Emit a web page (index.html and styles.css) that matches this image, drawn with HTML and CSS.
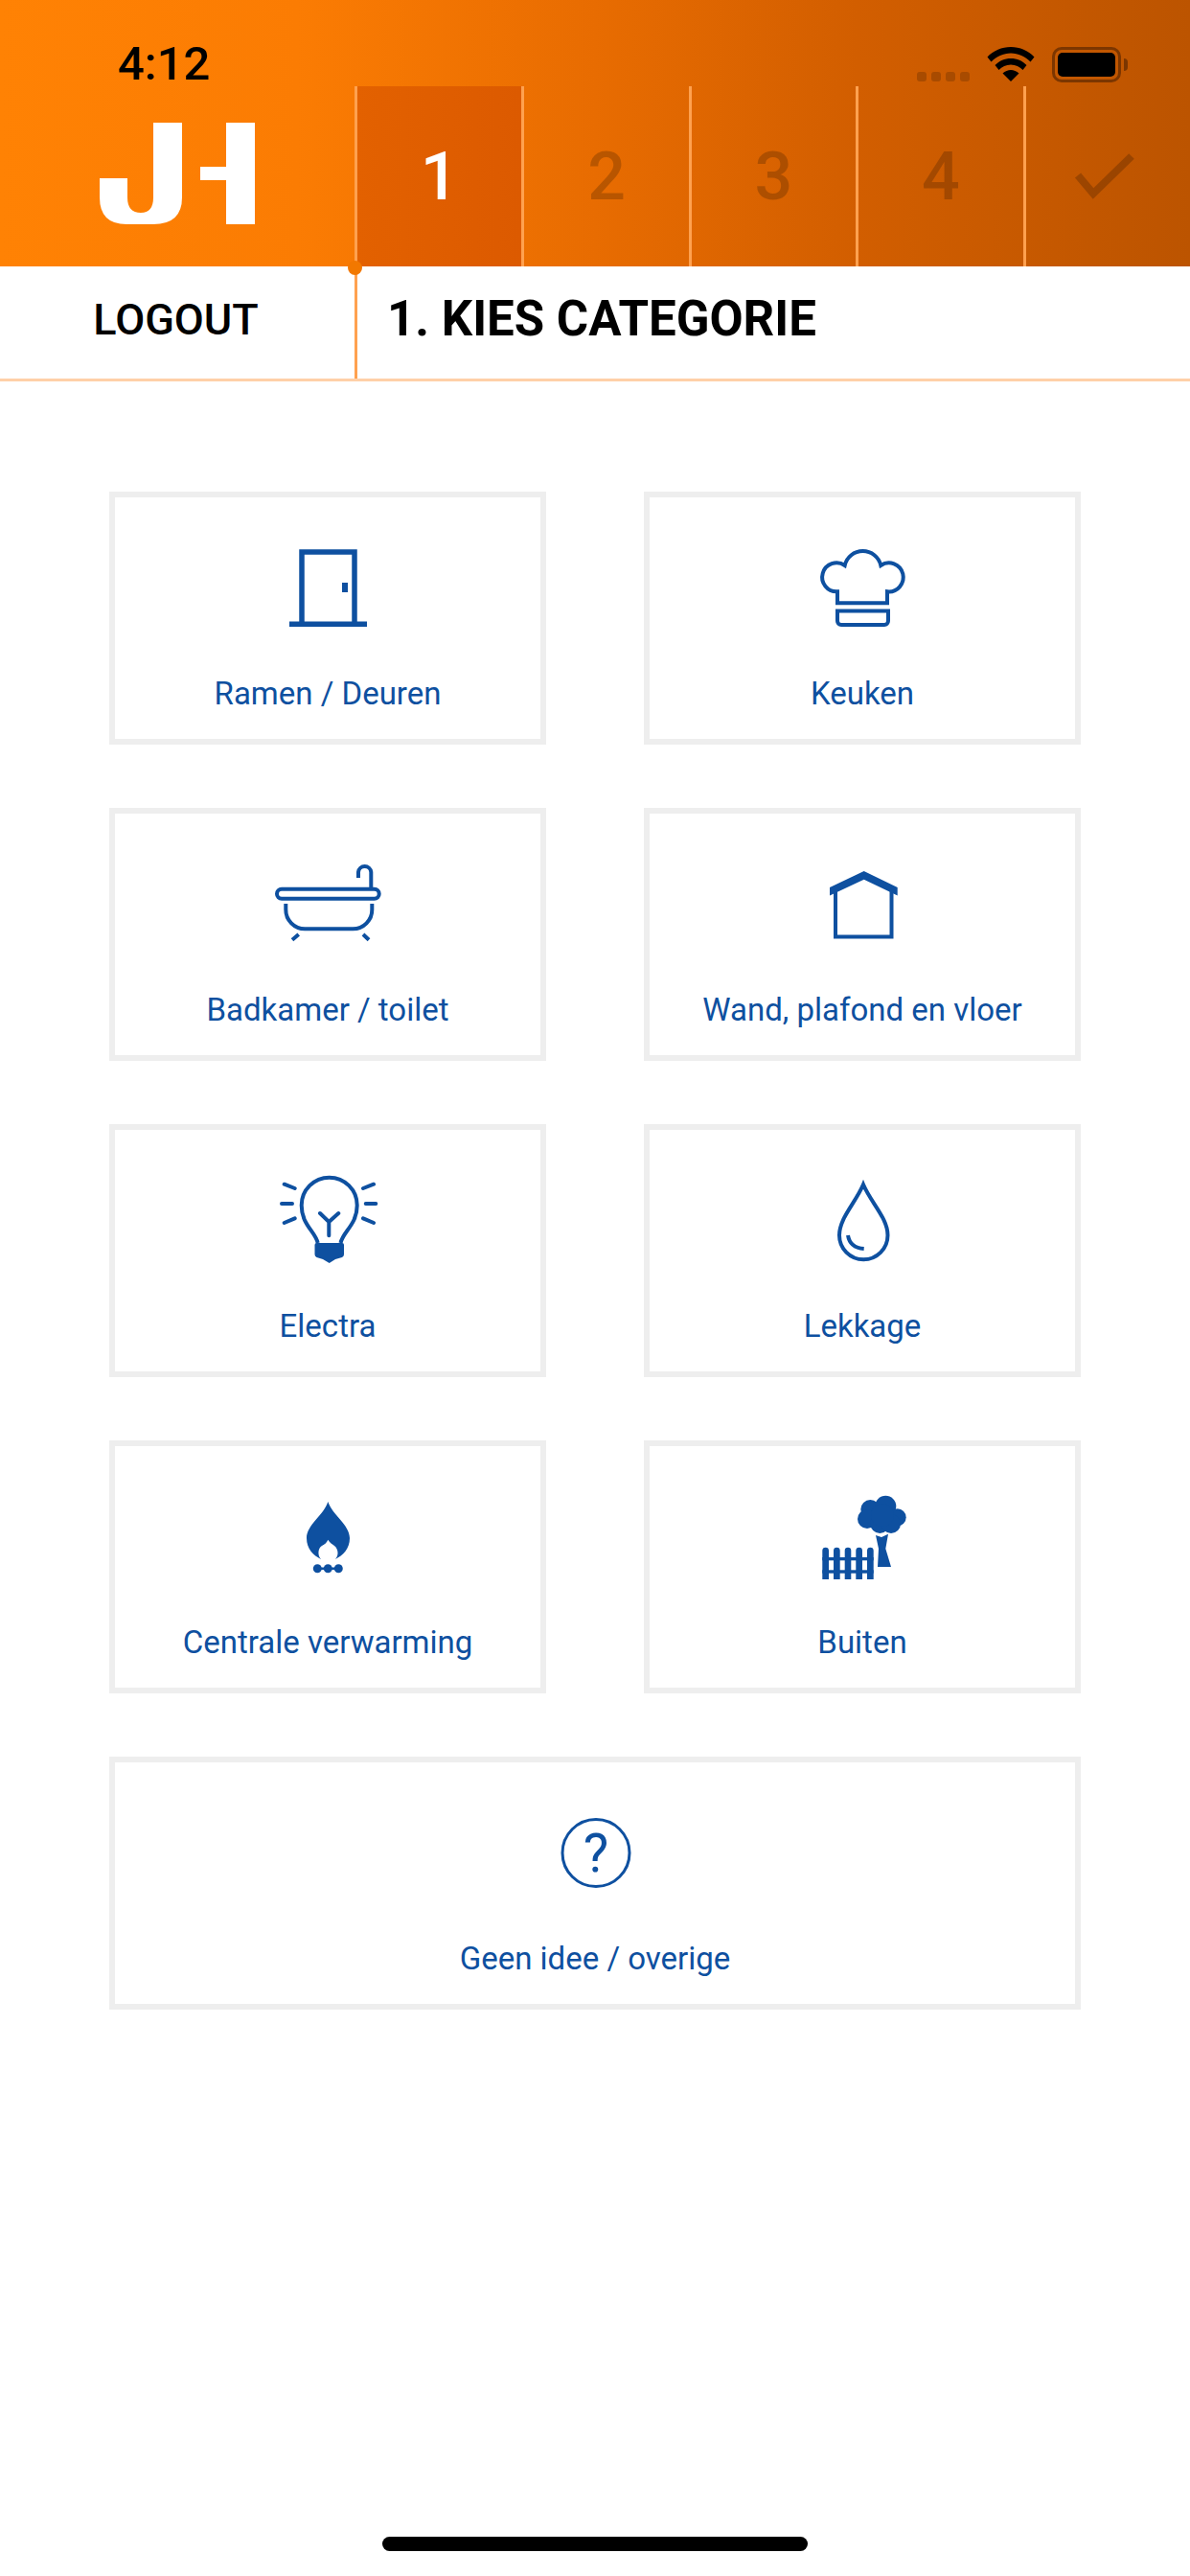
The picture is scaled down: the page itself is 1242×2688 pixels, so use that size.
FILE: index.html
```html
<!DOCTYPE html>
<html>
<head>
  <title>Kies categorie</title>
  <link rel="stylesheet" href="styles.css">
</head>
<body>
  <div class="page">
    <header class="header">
      <div class="status-bar">
        <span class="time">4:12</span>
        <div class="status-icons">
          <div class="signal"><i></i><i></i><i></i><i></i></div>
          <svg class="wifi" width="50" height="36" viewBox="0 0 50 36">
            <path d="M25 0C15.500 0 7 3.800 0.500 10.500L4.500 15.500C10 10 17 6.500 25 6.500S40 10 45.500 15.500L49.500 10.500C43 3.800 34.500 0 25 0Z"/>
            <path d="M25 12C18.500 12 13 14.500 8.500 19L12.500 24C15.800 20.800 20 18.500 25 18.500S34.200 20.800 37.500 24L41.500 19C37 14.500 31.500 12 25 12Z"/>
            <path d="M25 24C22 24 19 25.300 16.500 27.500L25 36L33.500 27.500C31 25.300 28 24 25 24Z"/>
          </svg>
          <div class="battery"><div class="battery-level"></div></div>
          <div class="battery-nub"></div>
        </div>
      </div>
      <div class="nav">
        <div class="logo">
          <svg width="162" height="106" viewBox="0 0 162 106">
            <path d="M56 0H86V78Q86 106 56 106H28Q0 106 0 78V58H29V78Q29 94 43 94Q56 94 56 78Z"/>
            <rect x="132" y="0" width="30" height="106"/>
            <rect x="105" y="46" width="27" height="14"/>
          </svg>
        </div>
        <div class="steps">
          <div class="step active">1</div>
          <div class="step">2</div>
          <div class="step">3</div>
          <div class="step">4</div>
          <div class="step">
            <svg class="check" width="66" height="50" viewBox="0 0 66 50">
              <path d="M6 24L22 43L62 4"/>
            </svg>
          </div>
        </div>
      </div>
    </header>

    <div class="sub-bar">
      <span class="dot"></span>
      <div class="logout">LOGOUT</div>
      <h1 class="title">1. KIES CATEGORIE</h1>
    </div>

    <main class="grid">
      <div class="card">
        <svg class="icon" viewBox="0 0 140 100">
          <path class="line heavy" d="M43 88V13H98V88"/>
          <rect class="fill" x="30" y="85.500" width="81" height="5.500"/>
          <rect class="fill" x="85" y="45" width="6" height="10"/>
        </svg>
        <span class="label">Ramen / Deuren</span>
      </div>
      <div class="card">
        <svg class="icon" viewBox="-1 0 140 100">
          <path class="line" d="M50.700 27A19.300 19.300 0 0 1 88.300 27A15 15 0 1 1 95 54.300V66.300H43V54.300A15 15 0 1 1 50.700 27Z"/>
          <path class="line" d="M43 74.500H96V85A4 4 0 0 1 92 89H47A4 4 0 0 1 43 85Z"/>
        </svg>
        <span class="label">Keuken</span>
      </div>
      <div class="card">
        <svg class="icon" viewBox="0 0 140 100">
          <rect class="line" x="17" y="34.700" width="106.700" height="10" rx="5"/>
          <path class="line" d="M115.300 34V17A6.700 6.700 0 0 0 102 17V23"/>
          <path class="line" d="M26.300 50V56A20 20 0 0 0 46.300 76.300H96.300A20 20 0 0 0 116.300 56V50"/>
          <path class="line" d="M33 87.700L39.700 82M113 87.700L107 82"/>
        </svg>
        <span class="label">Badkamer / toilet</span>
      </div>
      <div class="card">
        <svg class="icon" viewBox="-1 0 140 100">
          <polygon class="fill" points="35,33 70.700,16 105.700,33 105.700,41.500 70.700,24.700 35,41.500"/>
          <path class="line" d="M41 37V84.500H99.500V37"/>
        </svg>
        <span class="label">Wand, plafond en vloer</span>
      </div>
      <div class="card">
        <svg class="icon" viewBox="0 0 140 100">
          <path class="line" d="M59.700 74C57 62 42.700 55 42.700 34.700A29 29 0 0 1 100.700 34.700C100.700 55 86 62 83.500 74"/>
          <path class="fill" d="M56.500 76Q56.500 74 58.500 74H85Q87 74 87 76V86Q87 88 85 89L78 91L71.700 95L65 91L58.500 89Q56.500 88 56.500 86Z"/>
          <path class="line round" d="M62 43L71.300 52L81.300 43M71.300 52V66.300"/>
          <path class="line round" d="M24.700 12.700L35.700 17M22 33H33M24.700 53L35.700 48.300M118 12.700L107 17M120.300 33H109.700M118 53L107 48.300"/>
        </svg>
        <span class="label">Electra</span>
      </div>
      <div class="card">
        <svg class="icon" viewBox="-1 0 140 100">
          <path class="line" d="M70 13C62 32 45 48 45 66A25.200 25.200 0 0 0 95.500 66C95.500 48 78 32 70 13Z"/>
          <path class="line" d="M54 66Q56 79 70.700 80"/>
        </svg>
        <span class="label">Lekkage</span>
      </div>
      <div class="card">
        <svg class="icon" viewBox="0 0 140 100">
          <path class="fill" d="M70.300 14C66 28 48 38 48 52C48 63 55 70 63 74C59 70 60 62 64 60C67 58 69 57 70.300 53.700C72 57 75 58 77 60C81 63 82 70 78 74C86 70 93 63 93 52C93 38 75 28 70.300 14Z"/>
          <circle class="fill" cx="59.300" cy="83.700" r="4.500"/>
          <circle class="fill" cx="70.300" cy="83.700" r="4.500"/>
          <circle class="fill" cx="81.300" cy="83.700" r="4.500"/>
          <rect class="fill" x="59" y="82.500" width="22" height="2.500"/>
        </svg>
        <span class="label">Centrale verwarming</span>
      </div>
      <div class="card">
        <svg class="icon" viewBox="-1 0 140 100">
          <circle class="fill" cx="77.300" cy="22" r="10"/>
          <circle class="fill" cx="93.300" cy="18.700" r="11"/>
          <circle class="fill" cx="105.700" cy="30.300" r="9"/>
          <circle class="fill" cx="74" cy="32" r="10"/>
          <circle class="fill" cx="87.300" cy="37" r="10"/>
          <circle class="fill" cx="99" cy="37" r="10"/>
          <circle class="fill" cx="90" cy="28" r="12"/>
          <polygon class="fill" points="83,49 89,51 96,47.700 93.300,63 99,82 85,82 86,63"/>
          <path class="fill" d="M27.300 65a3.300 3.300 0 0 1 6.700 0V95H27.300ZM39 65a3.300 3.300 0 0 1 6.700 0V95H39ZM50.700 65a3.300 3.300 0 0 1 6.600 0V95H50.700ZM62.300 65a3.300 3.300 0 0 1 6.700 0V95H62.300ZM74 65a3.300 3.300 0 0 1 6.700 0V95H74Z"/>
          <rect class="fill" x="27.300" y="72" width="53.400" height="3.300"/>
          <rect class="fill" x="27.300" y="85.300" width="53.400" height="3.400"/>
        </svg>
        <span class="label">Buiten</span>
      </div>
      <div class="card wide">
        <svg class="icon" viewBox="0 0 140 100">
          <circle class="thin" cx="71" cy="50.500" r="35"/>
          <text class="question" x="71" y="70.300">?</text>
        </svg>
        <span class="label">Geen idee / overige</span>
      </div>
    </main>

    <div class="home-indicator"></div>
  </div>
</body>
</html>
```

FILE: styles.css
```css
* {
  box-sizing: border-box;
}
body {
  margin: 0;
  background-color: #fff;
  font-family: Roboto, "Liberation Sans", sans-serif;
}
.page {
  display: flex;
  flex-direction: column;
  height: 2688px;
}

/* orange header */
.header {
  height: 278px;
  background: linear-gradient(90deg, #ff8204 0%, #fb7c03 25%, #e86c01 50%, #d25e00 72%, #bc5400 100%);
}
.status-bar {
  display: flex;
  justify-content: space-between;
  height: 90px;
  padding: 49px 65px 0 123px;
}
.time {
  font-size: 49px;
  font-weight: 500;
  line-height: 36px;
  color: #000;
}
.status-icons {
  display: flex;
  align-items: flex-start;
}
.signal {
  display: flex;
  gap: 5px;
  margin: 26px 18px 0 0;
}
.signal i {
  width: 10px;
  height: 10px;
  border-radius: 3px;
  background-color: #a84b00;
}
.wifi {
  margin-right: 18px;
  fill: #000;
}
.battery {
  width: 72px;
  height: 37px;
  padding: 3px;
  border: 3px solid #7c3600;
  border-radius: 10px;
}
.battery-level {
  height: 100%;
  border-radius: 5px;
  background-color: #000;
}
.battery-nub {
  width: 4px;
  height: 13px;
  margin: 12px 0 0 3px;
  border-radius: 0 4px 4px 0;
  background-color: #7c3600;
}
.nav {
  display: flex;
  height: 188px;
}
.logo {
  display: flex;
  align-items: center;
  justify-content: center;
  width: 370px;
  padding-bottom: 6px;
  fill: #fff;
}
.steps {
  flex: 1;
  display: grid;
  grid-template-columns: repeat(5, 1fr);
}
.step {
  display: flex;
  align-items: center;
  justify-content: center;
  border-left: 3px solid #ffa14f;
  font-size: 70px;
  font-weight: 500;
  color: rgba(0, 0, 0, 0.2);
}
.step.active {
  background: linear-gradient(90deg, #e36100, #dc5a00);
  color: #fff;
}
.check {
  margin-right: 8px;
  fill: none;
  stroke: rgba(0, 0, 0, 0.2);
  stroke-width: 8;
}

/* logout + page title */
.sub-bar {
  position: relative;
  display: flex;
  height: 120px;
  border-bottom: 3px solid #ffd0a8;
}
.dot {
  position: absolute;
  top: -6px;
  left: 363px;
  width: 15px;
  height: 15px;
  border-radius: 50%;
  background-color: #f27800;
}
.logout {
  display: flex;
  align-items: center;
  justify-content: center;
  width: 373px;
  padding: 0 3px 7px 0;
  border-right: 3px solid #ffa14f;
  font-size: 45px;
  font-weight: 500;
  color: #000;
}
.title {
  margin: 0;
  padding-left: 31px;
  font-size: 51px;
  font-weight: 700;
  line-height: 110px;
  color: #000;
}

/* category cards */
.grid {
  flex: 1;
  display: grid;
  grid-template-columns: 456px 456px;
  grid-auto-rows: 264px;
  column-gap: 102px;
  row-gap: 66px;
  padding: 115px 114px 0;
}
.card {
  display: flex;
  flex-direction: column;
  align-items: center;
  padding-top: 44px;
  border: 6px solid #eee;
}
.card.wide {
  grid-column: span 2;
}
.icon {
  width: 140px;
  height: 100px;
}
.label {
  margin-top: 41px;
  font-size: 33px;
  line-height: 40px;
  color: #0e50a0;
}
.line {
  fill: none;
  stroke: #0e50a0;
  stroke-width: 4;
}
.line.heavy {
  stroke-width: 5.5;
}
.line.round {
  stroke-linecap: round;
}
.fill {
  fill: #0e50a0;
}
.thin {
  fill: none;
  stroke: #0e50a0;
  stroke-width: 3;
}
.question {
  fill: #0e50a0;
  font-family: Roboto, sans-serif;
  font-size: 56px;
  font-weight: 400;
  text-anchor: middle;
}

.home-indicator {
  align-self: center;
  width: 444px;
  height: 15px;
  margin-bottom: 26px;
  border-radius: 8px;
  background-color: #000;
}
```
